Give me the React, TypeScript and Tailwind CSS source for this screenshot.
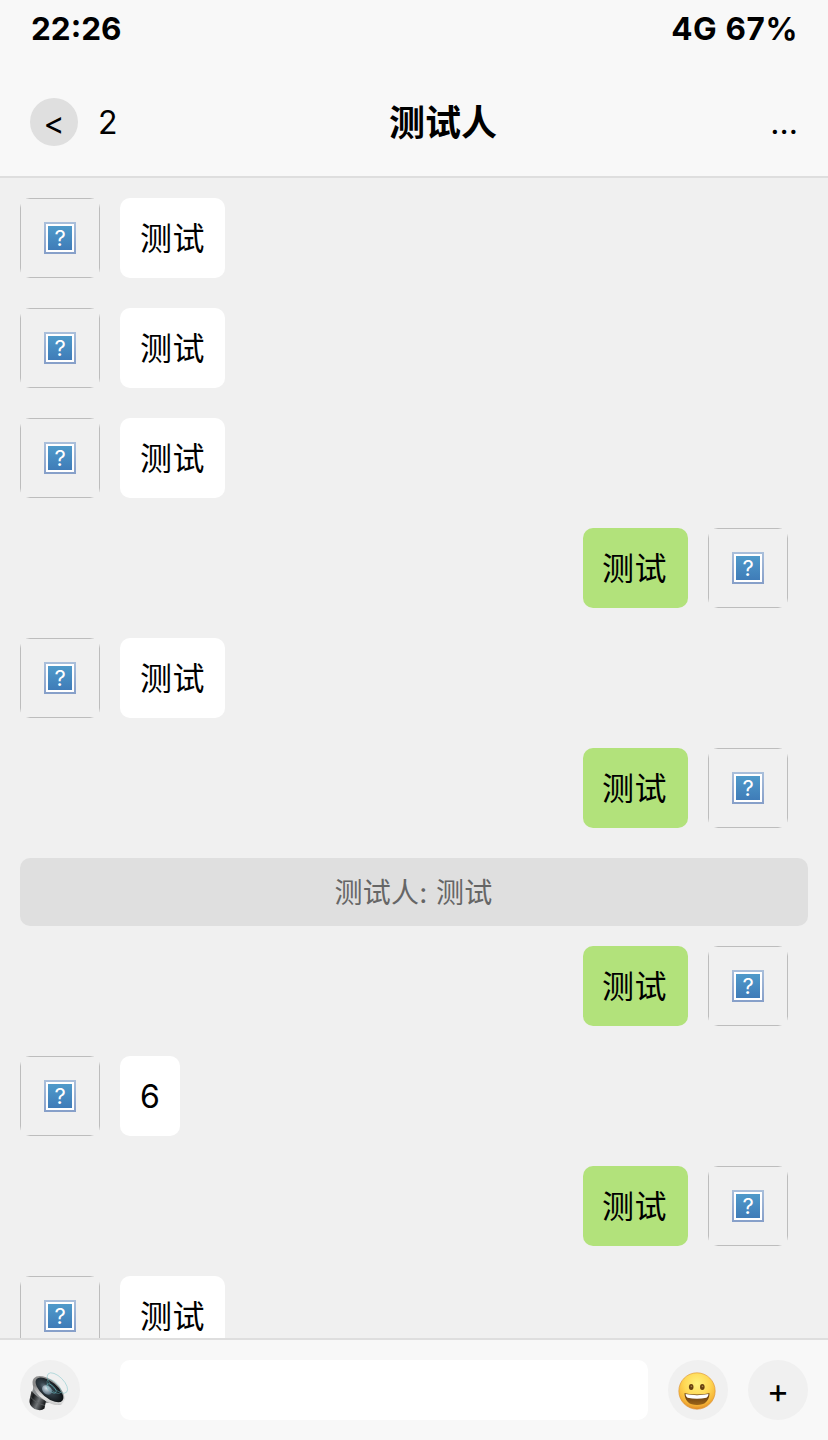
const messages = [
  { type: 'received', text: '测试' },
  { type: 'received', text: '测试' },
  { type: 'received', text: '测试' },
  { type: 'sent', text: '测试' },
  { type: 'received', text: '测试' },
  { type: 'sent', text: '测试' },
  { type: 'system', text: '测试人: 测试' },
  { type: 'sent', text: '测试' },
  { type: 'received', text: '6' },
  { type: 'sent', text: '测试' },
  { type: 'received', text: '测试' },
];

function Avatar() {
  return (
    <div className="h-20 w-20 shrink-0 overflow-hidden rounded-[10px]">
      <div className="flex h-20 w-20 items-center justify-center border border-[#bdbdbd]">
        <div className="h-8 w-8 bg-linear-to-b from-[#a9bfdb] to-[#869fc9] p-0.5">
          <div className="h-7 w-7 bg-white p-0.5">
            <div className="flex h-6 w-6 items-center justify-center bg-linear-to-b from-[#4f9aca] to-[#3f7cb8]">
              <span className="font-['Inter',sans-serif] text-[22px] leading-6 text-white">?</span>
            </div>
          </div>
        </div>
      </div>
    </div>
  );
}

function Message({ type, text }: { type: string; text: string }) {
  if (type === 'system') {
    return (
      <div className="mb-5 h-[68px] shrink-0 rounded-[10px] bg-[#dfdfdf] pr-px text-center text-[28px] leading-[70px] tracking-[0.3px] text-[#666]">
        {text}
      </div>
    );
  }

  const sent = type === 'sent';
  return (
    <div className={sent ? 'mb-[30px] flex shrink-0 flex-row-reverse gap-5 pr-5' : 'mb-[30px] flex shrink-0 gap-5'}>
      <Avatar />
      <div
        className={
          sent
            ? 'h-20 rounded-[10px] bg-[#b2e27b] pr-[21px] pl-[19px] leading-[82px] tracking-[0.5px]'
            : 'h-20 rounded-[10px] bg-white px-5 leading-[82px] tracking-[0.5px]'
        }
      >
        {text}
      </div>
    </div>
  );
}

function Speaker() {
  return (
    <svg className="h-[60px] w-[60px]" viewBox="0 0 60 60">
      <defs>
        <linearGradient id="magnet" x1="0" y1="0" x2="1" y2="0.5">
          <stop offset="0" stopColor="#555" />
          <stop offset="0.3" stopColor="#17191b" />
          <stop offset="0.65" stopColor="#707477" />
          <stop offset="1" stopColor="#191b1d" />
        </linearGradient>
        <linearGradient id="rim" x1="0" y1="0" x2="1" y2="1">
          <stop offset="0" stopColor="#999" />
          <stop offset="0.45" stopColor="#888" />
          <stop offset="0.7" stopColor="#e4e4e4" />
          <stop offset="1" stopColor="#aaa" />
        </linearGradient>
        <radialGradient id="cone" cx="0.4" cy="0.55" r="0.65">
          <stop offset="0" stopColor="#82929e" />
          <stop offset="0.35" stopColor="#35424b" />
          <stop offset="1" stopColor="#080b0d" />
        </radialGradient>
        <radialGradient id="cap" cx="0.35" cy="0.4" r="0.7">
          <stop offset="0" stopColor="#d6e2ea" />
          <stop offset="1" stopColor="#536878" />
        </radialGradient>
      </defs>
      {/* Horn and magnet */}
      <path d="M13 23 Q14 30 11 33 L24 44 Q28 41 38 45 L42 44Z" fill="#8b8e90" />
      <path d="M11.5 31 Q17 38 26 40.5 L24.5 48.5 Q21 51.5 14.5 49 Q8.5 45 9.5 40Z" fill="url(#magnet)" />
      <path d="M10.5 37 Q15 43 25 45.5" fill="none" stroke="#5f6365" strokeWidth="0.8" />
      <g transform="rotate(40 28.5 30.5)">
        <ellipse cx="28.5" cy="30.5" rx="19" ry="10.2" fill="url(#rim)" />
        <ellipse cx="28.8" cy="29.4" rx="16.8" ry="7.9" fill="url(#cone)" />
        <ellipse cx="27" cy="31" rx="5.5" ry="4.2" fill="url(#cap)" />
      </g>
      {/* Sound rings */}
      <g fill="none" stroke="#68bcc2" strokeWidth="0.7">
        <ellipse cx="37.4" cy="23" rx="13" ry="6.2" transform="rotate(45 37.4 23)" opacity="0.6" />
        <ellipse cx="34" cy="26.5" rx="9" ry="4.2" transform="rotate(45 34 26.5)" opacity="0.55" />
        <ellipse cx="31.5" cy="28.5" rx="6" ry="2.8" transform="rotate(45 31.5 28.5)" opacity="0.8" />
      </g>
    </svg>
  );
}

function Smile() {
  return (
    <svg className="mr-[2px] mt-px h-[38px] w-[38px]" viewBox="0 0 38 38">
      <defs>
        <radialGradient id="face" cx="0.5" cy="0.3" r="0.72">
          <stop offset="0" stopColor="#fff27d" />
          <stop offset="0.48" stopColor="#ffd956" />
          <stop offset="0.8" stopColor="#f6b638" />
          <stop offset="1" stopColor="#dc8426" />
        </radialGradient>
        <linearGradient id="mouth" x1="0" y1="0" x2="0" y2="1">
          <stop offset="0" stopColor="#5b3511" />
          <stop offset="1" stopColor="#9c6518" />
        </linearGradient>
      </defs>
      <circle cx="19" cy="19" r="18.2" fill="url(#face)" stroke="#dc9030" strokeWidth="0.6" />
      <ellipse cx="13.2" cy="15" rx="2.3" ry="2.9" fill="#67400f" />
      <ellipse cx="24.3" cy="15" rx="2.3" ry="2.9" fill="#67400f" />
      <circle cx="13.4" cy="14.4" r="0.8" fill="#a68145" />
      <circle cx="24.5" cy="14.4" r="0.8" fill="#a68145" />
      <path d="M6.5 21.2 Q19 23.7 31.5 21.2 Q31 33 19 33 Q7 33 6.5 21.2Z" fill="url(#mouth)" />
      <path d="M7.5 22 Q19 24.3 30.5 22 Q30.5 25 28.5 25.8 Q19 27.5 9.5 25.8 Q7.5 25 7.5 22Z" fill="#fff" />
    </svg>
  );
}

export default function App() {
  return (
    <div className="flex h-[1440px] w-[828px] flex-col overflow-hidden bg-[#f0f0f0] font-['Inter','Noto_Sans_CJK_SC',sans-serif] text-[32px] text-black">
      {/* Status bar */}
      <div className="flex h-[58px] shrink-0 items-center justify-between bg-[#f8f8f8] pr-[30px] pl-[31px] pb-px text-[31.5px] font-bold">
        <span>22:26</span>
        <span className="tracking-[0.6px]">4G 67%</span>
      </div>

      {/* Chat header */}
      <header className="flex h-[120px] shrink-0 items-center justify-between border-b-2 border-[#dedede] bg-[#f8f8f8] px-[30px] pt-2.5">
        <div className="flex items-center gap-5">
          <div className="flex h-12 w-12 items-center justify-center rounded-full bg-[#dfdfdf]">
            <span className="pt-1 text-[32px] leading-12">&lt;</span>
          </div>
          <span className="pt-0.5">2</span>
        </div>
        <h1 className="pt-0.5 pr-0.5 text-[36px] font-bold">测试人</h1>
        <span className="pt-0.5">...</span>
      </header>

      {/* Messages */}
      <main className="flex min-h-0 flex-1 flex-col overflow-hidden p-5 pb-0">
        {messages.map((message, i) => (
          <Message key={i} type={message.type} text={message.text} />
        ))}
      </main>

      {/* Input bar */}
      <footer className="flex h-[102px] shrink-0 items-center gap-5 border-t-2 border-[#dedede] bg-[#f8f8f8] px-5">
        <button className="h-[60px] w-[60px] shrink-0 rounded-full bg-[#f0f0f0]">
          <Speaker />
        </button>
        <input className="ml-5 h-[60px] min-w-0 flex-1 rounded-[10px] bg-white px-5 outline-none" />
        <button className="flex h-[60px] w-[60px] shrink-0 items-center justify-center rounded-full bg-[#f0f0f0]">
          <Smile />
        </button>
        <button className="flex h-[60px] w-[60px] shrink-0 items-center justify-center rounded-full bg-[#f0f0f0]">
          <span className="pt-0.5 text-[34px] leading-[60px]">+</span>
        </button>
      </footer>
    </div>
  );
}
